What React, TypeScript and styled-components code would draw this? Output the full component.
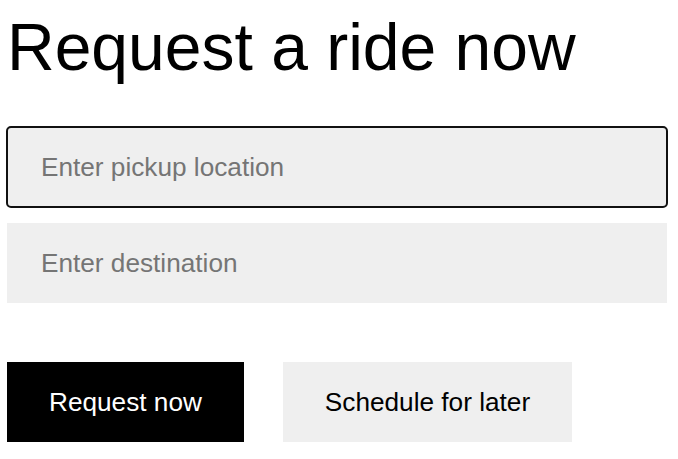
import styled, { createGlobalStyle } from "styled-components";

const GlobalStyle = createGlobalStyle`
  body {
    margin: 0;
    background: #ffffff;
    font-family: "Liberation Sans", Arial, sans-serif;
  }
`;

function App() {
  return (
    <>
      <GlobalStyle />
      <Page>
        <Title>Request a ride now</Title>
        <Fields>
          <RideInput placeholder="Enter pickup location" $focused />
          <RideInput placeholder="Enter destination" />
        </Fields>
        <Actions>
          <ActionButton $primary>Request now</ActionButton>
          <ActionButton>Schedule for later</ActionButton>
        </Actions>
      </Page>
    </>
  );
}

export default App;

const Page = styled.main`
  padding: 14px 11px 0 7px;
  display: flex;
  flex-direction: column;
`;

const Title = styled.h1`
  margin: 0 0 47px 0;
  font-size: 66px;
  font-weight: 400;
  line-height: 66px;
  color: #000000;
`;

const Fields = styled.div`
  display: flex;
  flex-direction: column;
  gap: 16px;
`;

const RideInput = styled.input<{ $focused?: boolean }>`
  box-sizing: border-box;
  width: 660px;
  height: 80px;
  padding: 0 34px;
  border: none;
  background: #efefef;
  font-family: inherit;
  font-size: 26.2px;
  color: #000000;
  border-radius: ${(p) => (p.$focused ? "4px" : "0")};
  outline: ${(p) => (p.$focused ? "2px solid #111111" : "none")};
  outline-offset: -1px;
  &::placeholder {
    color: #757575;
  }
`;

const Actions = styled.div`
  margin-top: 59px;
  display: flex;
  gap: 39px;
`;

const ActionButton = styled.button<{ $primary?: boolean }>`
  height: 80px;
  padding: 0 42px;
  border: none;
  font-family: inherit;
  font-size: 26.2px;
  cursor: pointer;
  background: ${(p) => (p.$primary ? "#000000" : "#efefef")};
  color: ${(p) => (p.$primary ? "#ffffff" : "#000000")};
`;
